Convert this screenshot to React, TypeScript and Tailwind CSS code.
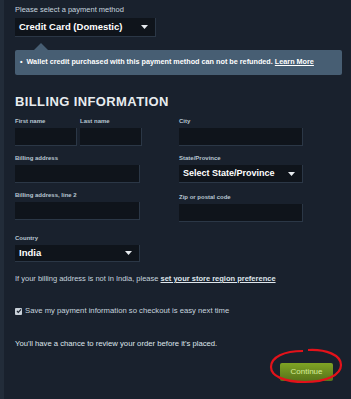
const sans = { fontFamily: '"Liberation Sans", Arial, sans-serif' };

function Label({ children, className = "" }: { children: React.ReactNode; className?: string }) {
  return <div className={`text-[6px] leading-[9px] font-bold text-[#b8c6d1] mb-[2px] ${className}`}>{children}</div>;
}

function Field({ className = "" }: { className?: string }) {
  return <div className={`h-[18px] bg-[#0f141b] border-b border-r border-[#2b3746] ${className}`} />;
}

function Select({ text, className = "" }: { text: string; className?: string }) {
  return (
    <div
      className={`flex items-center justify-between bg-[#0f141b] border-b border-r border-[#2b3746] pl-[4px] pr-[7px] text-white font-bold ${className}`}
    >
      <span>{text}</span>
      <svg width="7" height="4" viewBox="0 0 7 4">
        <path d="M0 0h7L3.5 4z" fill="#e6eaee" />
      </svg>
    </div>
  );
}

export default function App() {
  return (
    <main className="w-[351px] h-[399px] bg-[#19212d] flex overflow-hidden" style={sans}>
      <div className="w-[4px] shrink-0 bg-[#222c39]" />
      <div className="flex-1 pl-[11px] pr-[9px] pt-[5px] relative">
        <div className="text-[7.5px] leading-[10px] text-[#c6d4df]">Please select a payment method</div>
        <Select text="Credit Card (Domestic)" className="mt-[3px] w-[141px] h-[19px] text-[9.5px]" />

        <div className="relative mt-[13px] h-[25px] bg-[#475e73] rounded-[2px] flex items-center pl-[5px] text-[7.25px] font-bold text-white">
          <div className="absolute -top-[7px] left-[19px] w-0 h-0 border-l-[7px] border-r-[7px] border-b-[7px] border-l-transparent border-r-transparent border-b-[#475e73]" />
          <span className="mr-[4px]">•</span>
          <span>
            Wallet credit purchased with this payment method can not be refunded. <span className="underline">Learn More</span>
          </span>
        </div>

        <h2 className="mt-[20px] text-[13px] leading-[14px] font-bold tracking-[0.03em] text-[#e8ecef]">BILLING INFORMATION</h2>

        <div className="flex mt-[8px]">
          <div className="w-[164px] shrink-0">
            <div className="flex gap-[3px]">
              <div>
                <Label>First name</Label>
                <Field className="w-[62px]" />
              </div>
              <div>
                <Label>Last name</Label>
                <Field className="w-[62px]" />
              </div>
            </div>
            <Label className="mt-[8px]">Billing address</Label>
            <Field className="w-[125px]" />
            <Label className="mt-[8px]">Billing address, line 2</Label>
            <Field className="w-[125px]" />
            <Label className="mt-[14px]">Country</Label>
            <Select text="India" className="w-[125px] h-[17px] text-[9.5px]" />
          </div>
          <div>
            <Label>City</Label>
            <Field className="w-[124px]" />
            <Label className="mt-[8px]">State/Province</Label>
            <Select text="Select State/Province" className="w-[124px] h-[18px] text-[9px]" />
            <Label className="mt-[10px]">Zip or postal code</Label>
            <Field className="w-[124px]" />
          </div>
        </div>

        <p className="mt-[12px] text-[7.5px] leading-[10px] text-[#c6d4df]">
          If your billing address is not in India, please{" "}
          <span className="underline font-bold text-[#dfe6ec]">set your store region preference</span>
        </p>

        <div className="mt-[22px] flex items-center gap-[3px] text-[7.7px] leading-[10px] text-[#c6d4df]">
          <div className="w-[7px] h-[7px] bg-[#c8d0d8] rounded-[1px] flex items-center justify-center">
            <svg width="6" height="6" viewBox="0 0 6 6">
              <path d="M1 3l1.3 1.4L5 1.4" stroke="#1b2330" strokeWidth="1.2" fill="none" />
            </svg>
          </div>
          <span>Save my payment information so checkout is easy next time</span>
        </div>

        <p className="mt-[23px] text-[7.7px] leading-[10px] text-[#dfe6ec]">
          You'll have a chance to review your order before it's placed.
        </p>

        <div className="flex justify-end mt-[8px] pr-[9px]">
          <div className="relative">
            <button className="w-[53px] h-[18px] rounded-[2px] bg-gradient-to-b from-[#7fa424] to-[#57731a] text-[8px] text-[#d6ec9c]">
              Continue
            </button>
            <svg className="absolute -left-[12px] -top-[9px]" width="75" height="36" viewBox="0 0 75 36">
              <path
                d="M40 2C58 1 73 7 73 17c0 10-15 17-36 17C16 34 3 28 3 19 3 9 16 3 35 3"
                stroke="#e3121a"
                strokeWidth="2.2"
                fill="none"
              />
            </svg>
          </div>
        </div>
      </div>
    </main>
  );
}
